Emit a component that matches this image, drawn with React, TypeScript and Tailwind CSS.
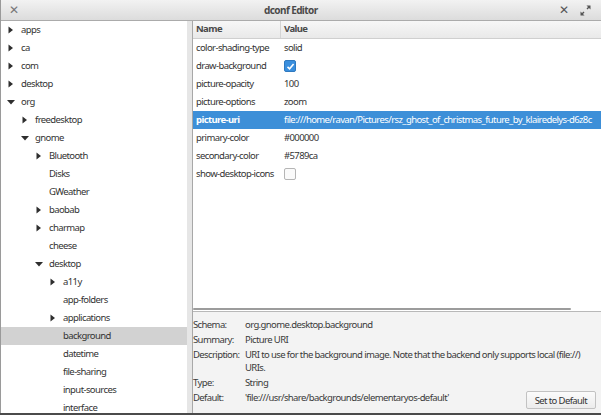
import React from "react";

type TreeNode = { label: string; level: number; arrow?: "right" | "down"; selected?: boolean };

const tree: TreeNode[] = [
  { label: "apps", level: 0, arrow: "right" },
  { label: "ca", level: 0, arrow: "right" },
  { label: "com", level: 0, arrow: "right" },
  { label: "desktop", level: 0, arrow: "right" },
  { label: "org", level: 0, arrow: "down" },
  { label: "freedesktop", level: 1, arrow: "right" },
  { label: "gnome", level: 1, arrow: "down" },
  { label: "Bluetooth", level: 2, arrow: "right" },
  { label: "Disks", level: 2 },
  { label: "GWeather", level: 2 },
  { label: "baobab", level: 2, arrow: "right" },
  { label: "charmap", level: 2, arrow: "right" },
  { label: "cheese", level: 2 },
  { label: "desktop", level: 2, arrow: "down" },
  { label: "a11y", level: 3, arrow: "right" },
  { label: "app-folders", level: 3 },
  { label: "applications", level: 3, arrow: "right" },
  { label: "background", level: 3, selected: true },
  { label: "datetime", level: 3 },
  { label: "file-sharing", level: 3 },
  { label: "input-sources", level: 3 },
  { label: "interface", level: 3 },
];

type KeyRow = { name: string; value?: string; check?: boolean; selected?: boolean };

const keys: KeyRow[] = [
  { name: "color-shading-type", value: "solid" },
  { name: "draw-background", check: true },
  { name: "picture-opacity", value: "100" },
  { name: "picture-options", value: "zoom" },
  {
    name: "picture-uri",
    value: "file:///home/ravan/Pictures/rsz_ghost_of_christmas_future_by_klairedelys-d6z8c",
    selected: true,
  },
  { name: "primary-color", value: "#000000" },
  { name: "secondary-color", value: "#5789ca" },
  { name: "show-desktop-icons", check: false },
];

const indent = ["pl-[6px]", "pl-[20px]", "pl-[34px]", "pl-[48px]"];

const Arrow = ({ dir }: { dir?: "right" | "down" }) => {
  if (!dir) return <span className="w-[14px] shrink-0" />;
  return (
    <span className="w-[14px] shrink-0 flex items-center">
      <svg width="8" height="8" viewBox="0 0 8 8">
        {dir === "right" ? <path d="M1.5 0.5 L6 4 L1.5 7.5 Z" fill="#2e2e2e" /> : <path d="M0 2 L8 2 L4 6.5 Z" fill="#2e2e2e" />}
      </svg>
    </span>
  );
};

const Check = ({ on }: { on: boolean }) =>
  on ? (
    <span className="w-[12px] h-[12px] rounded-[2px] bg-[#3a8fde] border border-[#2f79bf] flex items-center justify-center">
      <svg width="9" height="9" viewBox="0 0 9 9">
        <path d="M1.5 4.8 L3.6 6.8 L7.6 2" stroke="white" strokeWidth="1.6" fill="none" />
      </svg>
    </span>
  ) : (
    <span className="block w-[12px] h-[12px] rounded-[2px] bg-[#fafafa] border border-[#b5b5b5]" />
  );

export default function App() {
  return (
    <div className="w-[601px] h-[415px] bg-[#4b4b4b] overflow-hidden font-['Noto_Sans',sans-serif] text-[9.5px] tracking-[-0.6px] text-[#333]">
      <div className="h-[413px] flex flex-col bg-[#f3f3f3] border-l border-[#9a9a9a]">
        {/* title bar */}
        <div className="h-[21px] shrink-0 flex items-center bg-gradient-to-b from-[#f2f2f2] to-[#dcdcdc] border-b border-[#ababab] px-[8px]">
          <span className="text-[#777] text-[12px] leading-none w-[14px]">✕</span>
          <div className="flex-1 text-center font-bold text-[#4a4a4a] text-[10px]">dconf Editor</div>
          <span className="text-[#555] text-[12px] leading-none mr-[12px]">✕</span>
          <svg width="11" height="11" viewBox="0 0 11 11" className="mr-[2px]">
            <path d="M6.5 0.5 H10.5 V4.5 Z M4.5 10.5 H0.5 V6.5 Z" fill="#555" />
            <path d="M9 2 L7 4 M2 9 L4 7" stroke="#555" strokeWidth="1.4" />
          </svg>
        </div>

        <div className="flex-1 flex min-h-0">
          {/* tree */}
          <div className="w-[186px] shrink-0 bg-white overflow-hidden">
            {tree.map((n, i) => (
              <div
                key={i}
                className={`h-[18px] flex items-center ${indent[n.level]} ${n.selected ? "bg-[#d2d2d2]" : ""}`}
              >
                <Arrow dir={n.arrow} />
                <span className="whitespace-nowrap">{n.label}</span>
              </div>
            ))}
          </div>

          {/* pane handle */}
          <div className="w-[6px] shrink-0 bg-[#e6e6e6] border-r border-[#a8a8a8]" />

          {/* right side */}
          <div className="flex-1 flex flex-col min-w-0">
            <div className="h-[290px] shrink-0 flex flex-col bg-white overflow-hidden">
              <div className="h-[18px] shrink-0 flex items-center bg-gradient-to-b from-[#f7f7f7] to-[#e9e9e9] border-b border-[#cfcfcf] font-bold text-[#4a4a4a]">
                <div className="w-[88px] shrink-0 pl-[3px] h-full flex items-center border-r border-[#d4d4d4]">Name</div>
                <div className="pl-[3px]">Value</div>
              </div>
              {keys.map((k, i) => (
                <div
                  key={i}
                  className={`h-[18px] shrink-0 flex items-center whitespace-nowrap ${k.selected ? "bg-[#3d8fd8] text-white" : ""}`}
                >
                  <div className={`w-[88px] shrink-0 pl-[3px] ${k.selected ? "font-bold" : ""}`}>{k.name}</div>
                  <div className="pl-[3px]">
                    {k.check !== undefined ? <Check on={k.check} /> : k.value}
                  </div>
                </div>
              ))}
              <div className="flex-1" />
              <div className="h-[4px] shrink-0 flex items-center pr-[30px]">
                <div className="flex-1 h-[2px] bg-[#9c9c9c] rounded-full" />
              </div>
            </div>
            <div className="h-[1px] bg-[#b8b8b8]" />

            {/* details */}
            <div className="flex-1 pt-[5px] pr-[6px] leading-[15px] text-[#3a3a3a]">
              <div className="flex"><span className="w-[52px] shrink-0">Schema:</span><span>org.gnome.desktop.background</span></div>
              <div className="flex"><span className="w-[52px] shrink-0">Summary:</span><span>Picture URI</span></div>
              <div className="flex leading-[13px] py-[1px]">
                <span className="w-[52px] shrink-0">Description:</span>
                <span>URI to use for the background image. Note that the backend only supports local (file://) URIs.</span>
              </div>
              <div className="flex"><span className="w-[52px] shrink-0">Type:</span><span>String</span></div>
              <div className="flex items-start">
                <span className="w-[52px] shrink-0">Default:</span>
                <span className="flex-1">'file:///usr/share/backgrounds/elementaryos-default'</span>
                <button className="h-[18px] px-[8px] border border-[#c2c2c2] rounded-[2px] bg-gradient-to-b from-[#fbfbfb] to-[#ececec] text-[#333] mt-[1px] mr-[-1px]">
                  Set to Default
                </button>
              </div>
            </div>
          </div>
        </div>
      </div>
    </div>
  );
}
